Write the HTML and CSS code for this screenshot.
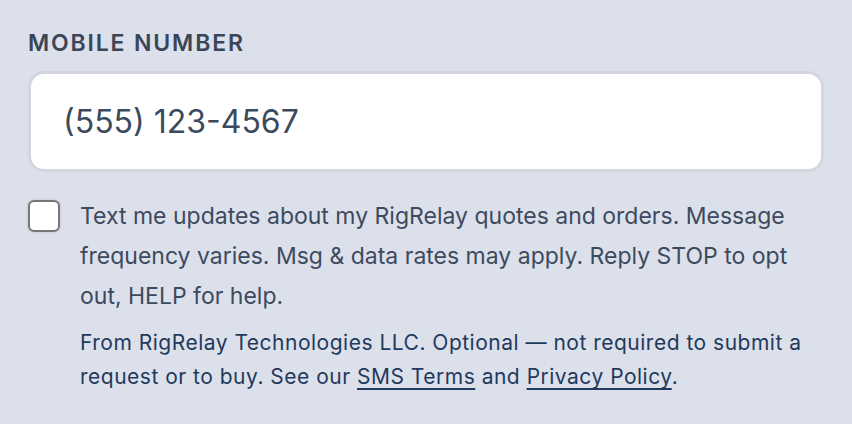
FILE: index.html
```html
<!DOCTYPE html>
<html lang="en">
<head>
  <meta charset="UTF-8" />
  <meta name="viewport" content="width=device-width, initial-scale=1.0" />
  <title>Mobile number</title>
  <link rel="stylesheet" href="styles.css">
</head>
<body>
  <div class="field">
    <label class="field-label" for="phone">Mobile number</label>
    <input class="field-input" id="phone" type="tel" value="(555) 123-4567" />

    <div class="consent">
      <input class="consent-box" id="smsOptIn" type="checkbox" />
      <div class="consent-body">
        <label class="consent-text" for="smsOptIn">Text me updates about my RigRelay quotes and orders. Message frequency varies. Msg &amp; data rates may apply. Reply STOP to opt out, HELP for help.</label>
        <p class="consent-note">From RigRelay Technologies LLC. Optional — not required to submit a request or to buy. See our <a href="#">SMS Terms</a> and <a href="#">Privacy Policy</a>.</p>
      </div>
    </div>
  </div>
</body>
</html>
```

FILE: styles.css
```css
body {
  margin: 0;
  padding: 0;
  font-family: 'Inter', 'Noto Sans', sans-serif;
  background-color: #dce0eb;
  color: #3c4a5e;
}

.field {
  display: flex;
  flex-direction: column;
  padding: 28px 28px 0 28px;
}

.field-label {
  font-size: 23px;
  font-weight: 600;
  letter-spacing: 0.08em;
  text-transform: uppercase;
  color: #3a4658;
  line-height: 30px;
  margin-bottom: 13px;
}

.field-input {
  box-sizing: border-box;
  height: 101px;
  padding: 0 32px;
  font-family: inherit;
  font-size: 32px;
  color: #3c4a5e;
  background-color: #fff;
  border: 3px solid #d3d6df;
  border-radius: 16px;
  outline: none;
}

.consent {
  display: flex;
  gap: 20px;
  margin-top: 28px;
}

.consent-box {
  appearance: none;
  flex: none;
  width: 32px;
  height: 32px;
  margin: 0;
  background-color: #fff;
  border: 2px solid #767676;
  border-radius: 6px;
  box-shadow: 0 0 0 2px #d4d8e2;
}

.consent-body {
  display: flex;
  flex-direction: column;
}

.consent-text {
  font-size: 23px;
  line-height: 40px;
  margin-top: -4px;
}

.consent-note {
  margin: 10px 0 0 0;
  font-size: 21px;
  letter-spacing: 0.5px;
  line-height: 34px;
  color: #1f3a5c;
}

.consent-note a {
  color: #1f3a5c;
  text-decoration: underline;
  text-decoration-thickness: 2px;
  text-underline-offset: 4px;
}
```
